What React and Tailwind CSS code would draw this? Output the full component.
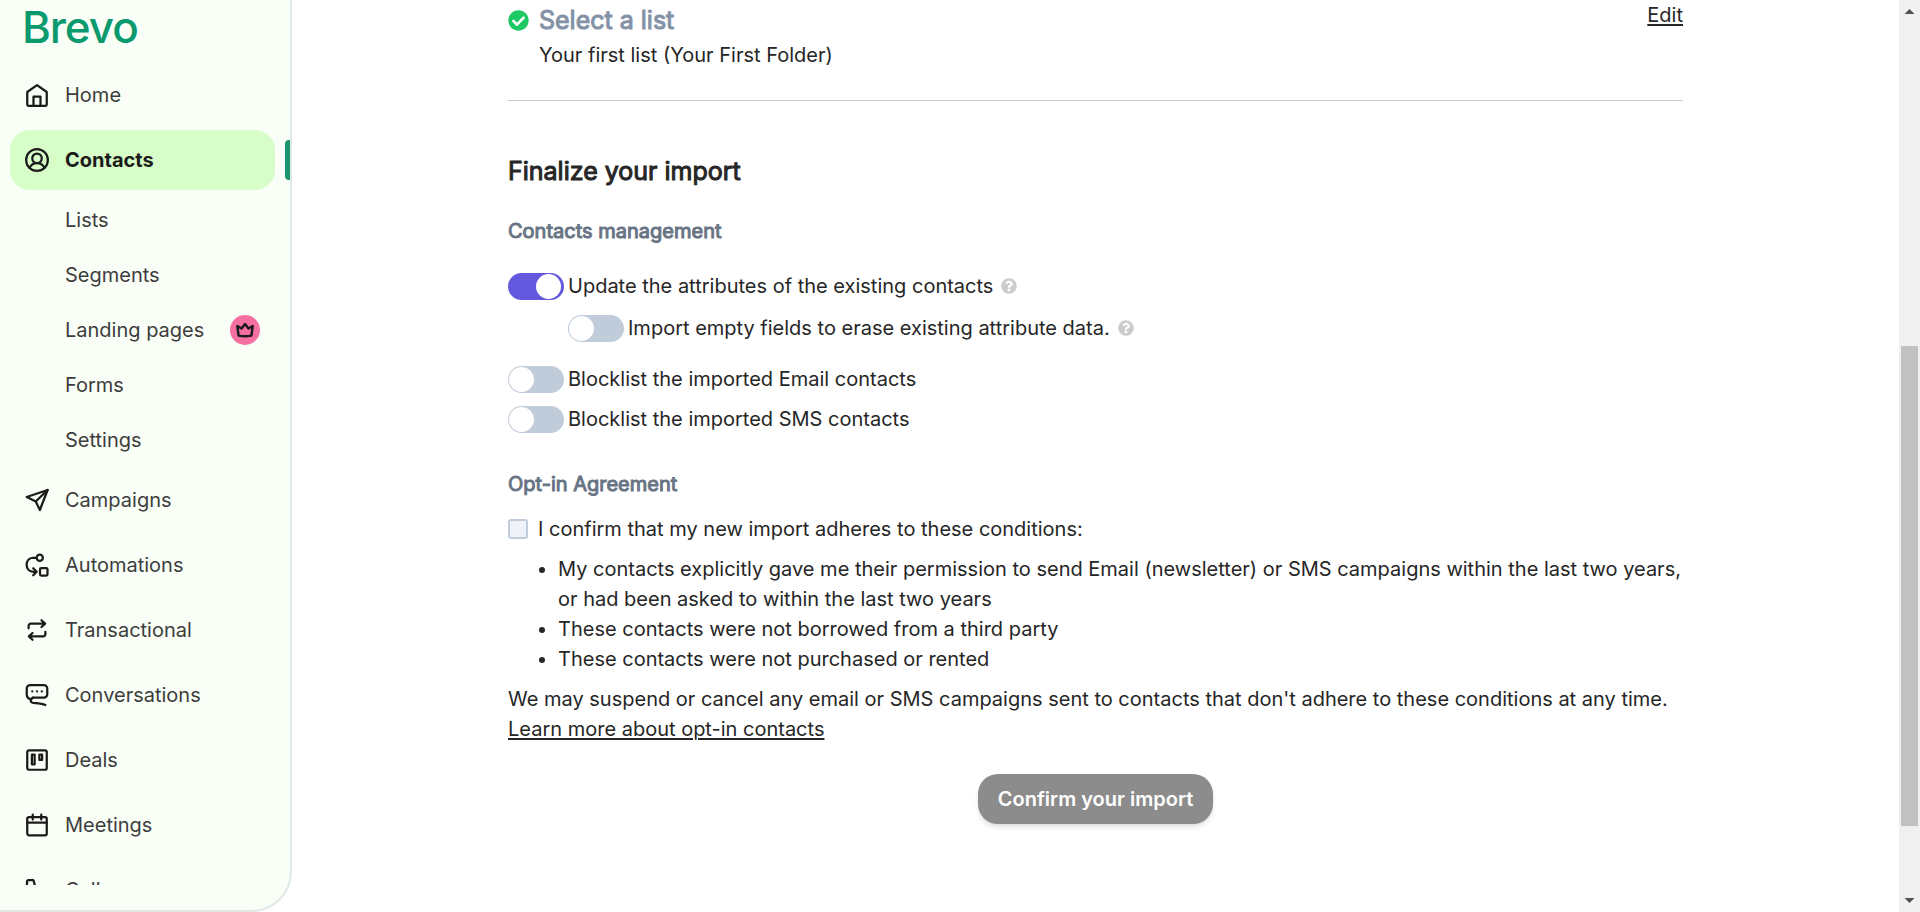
import React, { useState } from 'react';
import { FaCheckCircle, FaQuestionCircle } from 'react-icons/fa';

const Icon = ({ children }) => (
    <svg
        viewBox="0 0 24 24"
        className="h-[30px] w-[30px] shrink-0"
        fill="none"
        stroke="#1b1b1b"
        strokeWidth="1.8"
        strokeLinecap="round"
        strokeLinejoin="round"
        aria-hidden="true"
    >
        {children}
    </svg>
);

const icons = {
    home: (
        <Icon>
            <path d="M4.2 9.6 12 4.1l7.8 5.5v10a1 1 0 0 1-1 1H5.2a1 1 0 0 1-1-1z" />
            <path d="M9.2 20.4v-7.1h5.6v7.1" />
        </Icon>
    ),
    contacts: (
        <Icon>
            <circle cx="12" cy="12" r="8.7" />
            <circle cx="12" cy="10.6" r="3.8" />
            <path d="M6 18.2c1.2-2.3 3-3.8 6-3.8s4.8 1.5 6 3.8" />
        </Icon>
    ),
    campaigns: (
        <Icon>
            <path d="M20.5 4 3.8 9.6l7.2 3.6L14.3 20z" />
            <path d="M20.5 4 11 13.2" />
        </Icon>
    ),
    automations: (
        <Icon>
            <circle cx="14.2" cy="6.2" r="2.5" />
            <path d="M11.5 6.2H8.8C5.5 6.5 3.7 9 3.7 11.8c0 3.2 2.1 5.6 5.6 5.6h2" />
            <path d="m9 14.6 2.7 2.8L9 20.2" />
            <rect x="14.4" y="14.4" width="6" height="6" rx="1" />
        </Icon>
    ),
    transactional: (
        <Icon>
            <path d="M5.3 10.6V8.6a1.7 1.7 0 0 1 1.7-1.7h11.3M15.6 4.2l2.9 2.7-2.9 2.7" />
            <path d="M18.7 13.4v2a1.7 1.7 0 0 1-1.7 1.7H5.7M8.4 14.4l-2.9 2.7 2.9 2.7" />
        </Icon>
    ),
    conversations: (
        <Icon>
            <path d="M8.8 14.1h8.7a2.7 2.7 0 0 0 2.7-2.7V6.700A2.700 2.700 0 0 0 17.500 4h-11a2.700 2.700 0 0 0-2.700 2.700v4.700c0 2.200 1.500 3.700 3.600 4.100" />
            <path d="M8.800 14.100c-1.400.6-2.200 2.100-1.700 3.200.3.800 1.100.9 2 1 3.600.3 6.600.3 9.600 1.700" />
            <path d="M8.200 9.100h.01M12 9.100h.01M15.800 9.100h.01" />
        </Icon>
    ),
    deals: (
        <Icon>
            <rect x="4.2" y="4.2" width="15.6" height="15.6" rx="1.4" />
            <path d="M7.9 7.7h2.2v7.700H7.900zM13.900 7.700h2.200v4.200h-2.200z" />
        </Icon>
    ),
    meetings: (
        <Icon>
            <rect x="4.2" y="5.6" width="15.6" height="14.6" rx="1.4" />
            <path d="M4.2 10h15.600M8.600 3.600v4M15.400 3.600v4" />
        </Icon>
    ),
    calls: (
        <Icon>
            <path d="M4 8.500V5.200A1.200 1.200 0 0 1 5.200 4h3a1.200 1.200 0 0 1 1.200.9l.9 3.500a1.200 1.200 0 0 1-.5 1.300l-1.700 1.200a11 11 0 0 0 5 5l1.200-1.700a1.200 1.200 0 0 1 1.300-.5l3.500.9a1.200 1.200 0 0 1 .9 1.200v3a1.200 1.200 0 0 1-1.200 1.200h-3.300C9.300 20 4 14.700 4 8.500z" />
        </Icon>
    ),
};

const contactLinks = [
    { label: 'Lists' },
    { label: 'Segments' },
    { label: 'Landing pages', premium: true },
    { label: 'Forms' },
    { label: 'Settings' },
];

const mainLinks = [
    { label: 'Campaigns', icon: icons.campaigns },
    { label: 'Automations', icon: icons.automations },
    { label: 'Transactional', icon: icons.transactional },
    { label: 'Conversations', icon: icons.conversations },
    { label: 'Deals', icon: icons.deals },
    { label: 'Meetings', icon: icons.meetings },
    { label: 'Calls', icon: icons.calls },
];

const NavItem = ({ label, icon, active }) => (
    <a
        href="#"
        className={`mr-[15px] ml-[10px] flex h-[60px] items-center gap-[13px] rounded-[20px] pl-3 ${
            active ? 'bg-[#d7fec8] font-bold text-[#1b1b1b]' : 'font-normal text-[#3d3d3d]'
        }`}
    >
        {icon}
        {label}
    </a>
);

const Sidebar = () => (
    <aside className="flex w-[292px] shrink-0 flex-col overflow-hidden rounded-br-[40px] border-r-2 border-b-2 border-[#dfeae7] bg-[#f9fff6] pb-[25px]">
        <a href="#" className="h-[65px] shrink-0 pl-[22px] text-[44px] leading-[54px] font-medium tracking-tight text-[#0b996e]">
            Brevo
        </a>
        <nav className="min-h-0 flex-1 overflow-hidden">
            <ul>
                <li className="mb-[5px]">
                    <NavItem label="Home" icon={icons.home} />
                </li>
                <li>
                    <div className="flex items-center">
                        <div className="flex-1">
                            <NavItem label="Contacts" icon={icons.contacts} active />
                        </div>
                        <span className="-ml-[5px] h-10 w-[5px] rounded-l bg-[#1b9370]" />
                    </div>
                    <ul className="pt-[2px] pb-[3px]">
                        {contactLinks.map((link) => (
                            <li key={link.label}>
                                <a href="#" className="flex h-[55px] items-center justify-between pr-[30px] pl-[65px] font-normal text-[#3d3d3d]">
                                    {link.label}
                                    {link.premium && (
                                        <span className="flex h-[30px] w-[30px] items-center justify-center rounded-full bg-[#f56fa0]">
                                            <svg viewBox="0 0 20 20" className="h-5 w-5" fill="none" stroke="#1b1b1b" strokeWidth="2.4" strokeLinejoin="round" aria-hidden="true">
                                                <path d="m2.3 6 1.300 9.600q6.400 1.200 12.800 0L17.700 6l-4.200 2.500L10 4 6.500 8.500z" />
                                            </svg>
                                        </span>
                                    )}
                                </a>
                            </li>
                        ))}
                    </ul>
                </li>
                {mainLinks.map((link) => (
                    <li key={link.label} className="mb-[5px]">
                        <NavItem label={link.label} icon={link.icon} />
                    </li>
                ))}
            </ul>
        </nav>
    </aside>
);

const Toggle = ({ id, label, checked, onChange, help, className = '' }) => (
    <div className={`flex items-center ${className}`}>
        <input
            id={id}
            type="checkbox"
            role="switch"
            checked={checked}
            onChange={onChange}
            className="mr-1 flex h-[27px] w-14 shrink-0 appearance-none items-center rounded-full bg-[#c0ccda] px-px before:h-[25px] before:w-[25px] before:rounded-full before:bg-white checked:justify-end checked:bg-[#6358de] checked:px-[3px]"
        />
        <label htmlFor={id}>{label}</label>
        {help && <FaQuestionCircle className="ml-2 h-4 w-4 text-[#cccccc]" />}
    </div>
);

const FinalizeImport = () => {
    const [options, setOptions] = useState({
        update: true,
        empty: false,
        email: false,
        sms: false,
        optIn: false,
    });

    const toggle = (name) => () => setOptions((prev) => ({ ...prev, [name]: !prev[name] }));

    return (
        <section className="mt-[55px]">
            <h2 className="text-[25px] leading-[30px] [-webkit-text-stroke:1px]">Finalize your import</h2>

            <h3 className="mt-[30px] text-[#687484] [-webkit-text-stroke:1px]">Contacts management</h3>
            <Toggle
                id="update"
                label="Update the attributes of the existing contacts"
                checked={options.update}
                onChange={toggle('update')}
                help
                className="mt-[25px]"
            />
            <Toggle
                id="empty"
                label="Import empty fields to erase existing attribute data."
                checked={options.empty}
                onChange={toggle('empty')}
                help
                className="mt-3 ml-[60px]"
            />
            <Toggle
                id="email"
                label="Blocklist the imported Email contacts"
                checked={options.email}
                onChange={toggle('email')}
                className="mt-[21px]"
            />
            <Toggle
                id="sms"
                label="Blocklist the imported SMS contacts"
                checked={options.sms}
                onChange={toggle('sms')}
                className="mt-[10px]"
            />

            <h3 className="mt-[35px] text-[#687484] [-webkit-text-stroke:1px]">Opt-in Agreement</h3>
            <div className="mt-[15px] flex items-center gap-[10px]">
                <input
                    id="opt-in"
                    type="checkbox"
                    checked={options.optIn}
                    onChange={toggle('optIn')}
                    className="h-5 w-5 shrink-0 appearance-none rounded-[3px] border-2 border-[#c0ccda] bg-[#eff2f9] checked:bg-[#6358de]"
                />
                <label htmlFor="opt-in">I confirm that my new import adheres to these conditions:</label>
            </div>
            <ul className="mt-[10px] list-disc pl-[50px]">
                <li>
                    My contacts explicitly gave me their permission to send Email (newsletter) or SMS campaigns within the last two years, or had been asked to within the last two years
                </li>
                <li>These contacts were not borrowed from a third party</li>
                <li>These contacts were not purchased or rented</li>
            </ul>
            <p className="mt-[10px]">
                We may suspend or cancel any email or SMS campaigns sent to contacts that don't adhere to these conditions at any time.{' '}
                <a href="#" className="block w-fit underline decoration-2 underline-offset-2">
                    Learn more about opt-in contacts
                </a>
            </p>

            <div className="mt-[30px] flex justify-center">
                <button
                    type="button"
                    className="h-[50px] rounded-[20px] bg-[#8c8c8c] px-5 font-semibold text-white shadow-md shadow-black/10"
                >
                    Confirm your import
                </button>
            </div>
        </section>
    );
};

const Scrollbar = () => (
    <div className="flex w-[21px] shrink-0 flex-col items-center bg-[#f0f0f0]" aria-hidden="true">
        <svg viewBox="0 0 21 21" className="h-[21px] w-[21px]">
            <path d="M5.5 14h10l-5-5z" fill="#505050" />
        </svg>
        <div className="flex-[325]" />
        <div className="w-[17px] flex-[480] bg-[#c1c1c1]" />
        <div className="flex-[65]" />
        <svg viewBox="0 0 21 21" className="h-[21px] w-[21px]">
            <path d="M5.5 7h10l-5 5z" fill="#505050" />
        </svg>
    </div>
);

const App = () => {
    return (
        <div className="flex h-screen overflow-hidden bg-white font-['Inter',sans-serif] text-[20px] leading-[30px] text-[#1b1b1b]">
            <Sidebar />
            <main className="min-w-0 flex-1 overflow-hidden text-[#262626]">
                <div className="mx-auto max-w-[1175px]">
                    <section className="flex items-start justify-between border-b border-[#c8cdd2] pb-[30px]">
                        <div className="pt-[5px]">
                            <h2 className="flex items-center gap-[10px] text-[25px] leading-[30px] text-[#8492a6] [-webkit-text-stroke:1px]">
                                <FaCheckCircle className="h-[21px] w-[21px] text-[#1ec964]" />
                                Select a list
                            </h2>
                            <p className="mt-[5px] pl-[31px]">Your first list (Your First Folder)</p>
                        </div>
                        <a href="#" className="underline decoration-2 underline-offset-2">
                            Edit
                        </a>
                    </section>
                    <FinalizeImport />
                </div>
            </main>
            <Scrollbar />
        </div>
    );
};

export default App;
